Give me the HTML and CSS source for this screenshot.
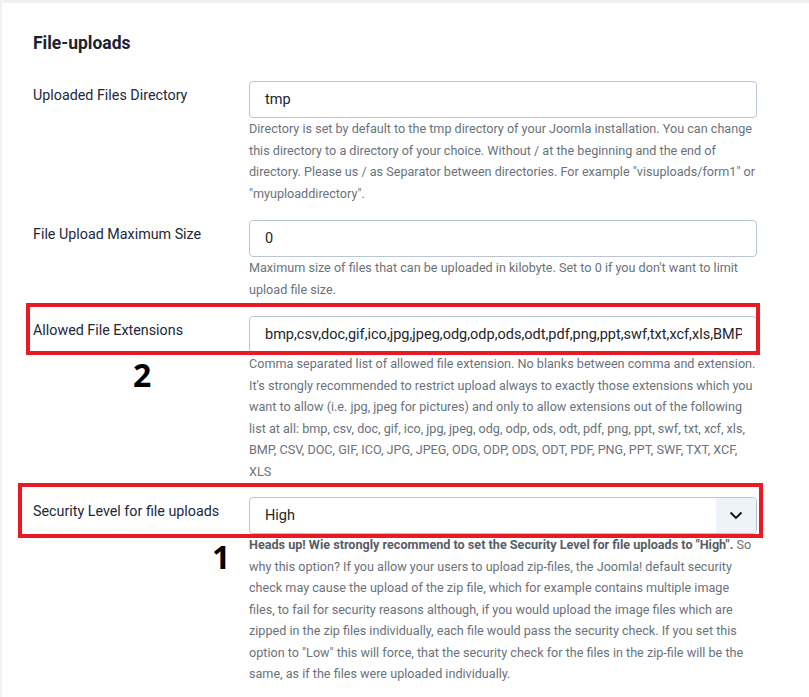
FILE: index.html
```html
<!DOCTYPE html>
<html lang="en">
<head>
<meta charset="utf-8">
<title>File-uploads</title>
<link rel="stylesheet" href="styles.css">
</head>
<body>
<div class="frame">
  <div class="panel">
    <h2 class="title">File-uploads</h2>

    <div class="field">
      <label class="label">Uploaded Files Directory</label>
      <div class="control">
        <div class="input">tmp</div>
        <div class="help">Directory is set by default to the tmp directory of your Joomla installation. You can change this directory to a directory of your choice. Without / at the beginning and the end of directory. Please us / as Separator between directories. For example "visuploads/form1" or "myuploaddirectory".</div>
      </div>
    </div>

    <div class="field">
      <label class="label">File Upload Maximum Size</label>
      <div class="control">
        <div class="input">0</div>
        <div class="help">Maximum size of files that can be uploaded in kilobyte. Set to 0 if you don't want to limit upload file size.</div>
      </div>
    </div>

    <div class="field field-tight">
      <div class="mark mark-ext"></div>
      <div class="num num-2">2</div>
      <label class="label">Allowed File Extensions</label>
      <div class="control">
        <div class="input"><div class="clip">bmp,csv,doc,gif,ico,jpg,jpeg,odg,odp,ods,odt,pdf,png,ppt,swf,txt,xcf,xls,BMP,CSV,DOC,GIF,ICO,JPG,JPEG,ODG,ODP,ODS,ODT,PDF,PNG,PPT,SWF,TXT,XCF,XLS</div></div>
        <div class="help">Comma separated list of allowed file extension. No blanks between comma and extension. It's strongly recommended to restrict upload always to exactly those extensions which you want to allow (i.e. jpg, jpeg for pictures) and only to allow extensions out of the following list at all: bmp, csv, doc, gif, ico, jpg, jpeg, odg, odp, ods, odt, pdf, png, ppt, swf, txt, xcf, xls, BMP, CSV, DOC, GIF, ICO, JPG, JPEG, ODG, ODP, ODS, ODT, PDF, PNG, PPT, SWF, TXT, XCF, XLS</div>
      </div>
    </div>

    <div class="field">
      <div class="mark mark-sec"></div>
      <div class="num num-1">1</div>
      <label class="label">Security Level for file uploads</label>
      <div class="control">
        <div class="select">
          <span class="select-value">High</span>
          <span class="select-caret"><svg width="14" height="9" viewBox="0 0 14 9"><path d="M1.5 1.5 L7 7 L12.5 1.5" fill="none" stroke="#111" stroke-width="1.8"/></svg></span>
        </div>
        <div class="help"><strong>Heads up! Wie strongly recommend to set the Security Level for file uploads to "High".</strong> So why this option? If you allow your users to upload zip-files, the Joomla! default security check may cause the upload of the zip file, which for example contains multiple image files, to fail for security reasons although, if you would upload the image files which are zipped in the zip files individually, each file would pass the security check. If you set this option to "Low" this will force, that the security check for the files in the zip-file will be the same, as if the files were uploaded individually.</div>
      </div>
    </div>
  </div>
</div>
</body>
</html>
```

FILE: styles.css
```css
html, body {
  margin: 0;
  padding: 0;
  background: #ffffff;
}
body {
  font-family: Roboto, "Liberation Sans", Arial, sans-serif;
  overflow: hidden;
}
.frame {
  background: #f0f2f5;
  padding: 3px 0 0 2px;
  min-height: 697px;
  box-sizing: border-box;
}
.panel {
  background: #ffffff;
  min-height: 694px;
  padding: 29px 52px 0 31px;
  box-sizing: border-box;
}
.title {
  margin: 0 0 27px 0;
  font-size: 17.5px;
  line-height: 22px;
  font-weight: 700;
  color: #1c2232;
}
.field {
  position: relative;
  display: flex;
  margin-bottom: 16px;
}
.field-tight {
  margin-bottom: 15px;
}
.label {
  width: 216px;
  flex: none;
  padding-top: 4px;
  font-size: 14.3px;
  line-height: 20px;
  color: #22283a;
}
.control {
  width: 508px;
  flex: none;
}
.input {
  height: 37px;
  box-sizing: border-box;
  border: 1px solid #b9c4d7;
  border-radius: 4px;
  background: #fff;
  padding: 0 15px;
  font-size: 14.5px;
  line-height: 35px;
  color: #22262a;
}
.clip {
  white-space: nowrap;
  overflow: hidden;
  margin-right: -1px;
}
.help {
  font-size: 12.62px;
  line-height: 21.5px;
  color: #6a727b;
}
.help strong {
  color: #575e66;
  font-weight: 700;
}
.select {
  height: 37px;
  box-sizing: border-box;
  border: 1px solid #b9c4d7;
  border-radius: 4px;
  display: flex;
  overflow: hidden;
}
.select-value {
  flex: 1;
  padding-left: 15px;
  font-size: 14.5px;
  line-height: 35px;
  color: #22262a;
}
.select-caret {
  width: 40px;
  background: #eef2f9;
  display: flex;
  align-items: center;
  justify-content: center;
}
.mark {
  position: absolute;
  border: 4.5px solid #e81b24;
  pointer-events: none;
}
.mark-ext {
  left: -7px;
  top: -13px;
  width: 726px;
  height: 44px;
}
.mark-sec {
  left: -15px;
  top: -14px;
  width: 737px;
  height: 47px;
}
.num {
  position: absolute;
  font-family: "Open Sans", "DejaVu Sans", sans-serif;
  font-weight: 700;
  font-size: 32px;
  line-height: 32px;
  color: #000;
}
.num-2 {
  left: 100px;
  top: 43px;
}
.num-1 {
  left: 179px;
  top: 44px;
}
```
